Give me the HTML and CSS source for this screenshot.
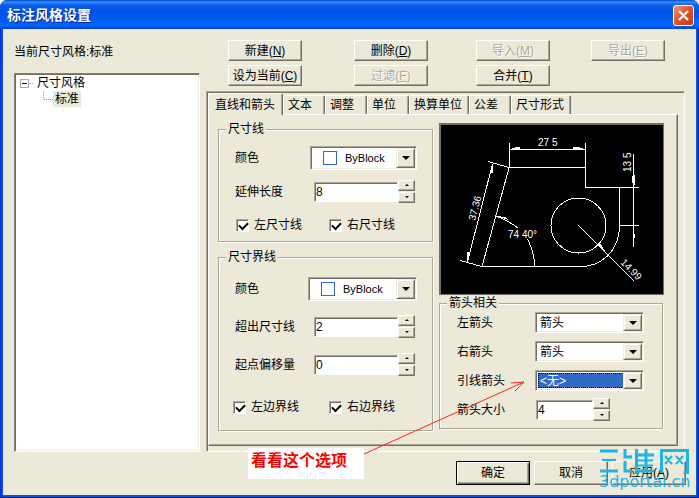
FILE: index.html
```html
<!DOCTYPE html>
<html lang="zh-CN">
<head>
<meta charset="utf-8">
<title>标注风格设置</title>
<link rel="stylesheet" href="styles.css">
</head>
<body>
<form class="window" onsubmit="return false">
  <header class="titlebar">
    <h1>标注风格设置</h1>
    <button type="button" class="close" aria-label="关闭"><svg width="11" height="11" viewBox="0 0 11 11"><path d="M1 1l9 9M10 1l-9 9" stroke="#fff" stroke-width="2.2"/></svg></button>
  </header>
  <div class="client">
    <div class="side">
      <p class="current">当前尺寸风格:标准</p>
      <div class="tree">
        <div class="node"><svg width="16" height="16" viewBox="0 0 16 16"><rect x="1.500" y="4.500" width="8" height="8" fill="#fff" stroke="#aca899"/><path d="M3 8.500h5" stroke="#000"/><path d="M11 8.500h4" stroke="#999" stroke-dasharray="1 1"/></svg><span>尺寸风格</span></div>
        <div class="node child"><svg width="13" height="16" viewBox="0 0 13 16"><path d="M3.500 0v8.500M4 8.500h9" fill="none" stroke="#999" stroke-dasharray="1 1"/></svg><span class="picked">标准</span></div>
      </div>
    </div>
    <div class="main">
      <div class="commands">
        <button type="button">新建(<u>N</u>)</button>
        <button type="button">删除(<u>D</u>)</button>
        <button type="button" disabled>导入(<u>M</u>)</button>
        <button type="button" disabled>导出(<u>E</u>)</button>
        <button type="button">设为当前(<u>C</u>)</button>
        <button type="button" disabled>过滤(<u>F</u>)</button>
        <button type="button">合并(<u>T</u>)</button>
      </div>
      <div class="frame">
        <nav class="tabs" role="tablist">
          <button type="button" role="tab" aria-selected="true" class="tab active">直线和箭头</button>
          <button type="button" role="tab" class="tab">文本</button>
          <button type="button" role="tab" class="tab">调整</button>
          <button type="button" role="tab" class="tab">单位</button>
          <button type="button" role="tab" class="tab wide">换算单位</button>
          <button type="button" role="tab" class="tab">公差</button>
          <button type="button" role="tab" class="tab wide">尺寸形式</button>
        </nav>
        <div class="page">
          <div class="column lines">
            <fieldset class="group dimension">
              <legend>尺寸线</legend>
              <div class="row"><label for="c1">颜色</label><span class="combo color"><select id="c1"><option>ByBlock</option></select></span></div>
              <div class="row"><label for="s1">延伸长度</label><span class="spin"><input id="s1" value="8"><button type="button" class="up" aria-label="增加"></button><button type="button" class="down" aria-label="减少"></button></span></div>
              <div class="checks"><label><input type="checkbox" checked>左尺寸线</label><label><input type="checkbox" checked>右尺寸线</label></div>
            </fieldset>
            <fieldset class="group extension">
              <legend>尺寸界线</legend>
              <div class="row"><label for="c2">颜色</label><span class="combo color"><select id="c2"><option>ByBlock</option></select></span></div>
              <div class="row"><label for="s2">超出尺寸线</label><span class="spin"><input id="s2" value="2"><button type="button" class="up" aria-label="增加"></button><button type="button" class="down" aria-label="减少"></button></span></div>
              <div class="row"><label for="s3">起点偏移量</label><span class="spin"><input id="s3" value="0"><button type="button" class="up" aria-label="增加"></button><button type="button" class="down" aria-label="减少"></button></span></div>
              <div class="checks"><label><input type="checkbox" checked>左边界线</label><label><input type="checkbox" checked>右边界线</label></div>
            </fieldset>
          </div>
          <div class="column arrows">
            <div class="preview">
              <svg viewBox="441 125 222 169" fill="none" stroke="#fff" shape-rendering="crispEdges">
                <path d="M509.500 143v25M585.500 143v44M510 149.500h75M510 167.500h75M585 187.500h54M619.500 188v38q0 18-12 30q-12 11-28 10.500H482L509 168M488 161.500l21 6M460.500 260.500l21 6M620 225.500h19M633.500 154v93M492.500 164L467.500 262M534.500 266q0-14-7-27M496 216q13 5 22 12M578.500 225.500L634 281"/>
                <circle cx="578.500" cy="225.500" r="27.500"/>
                <g fill="#fff" stroke="none"><path d="M511 149l5-2h4v3zM584 149l-5-2h-6v3zM633 187l-1-9 1-3h2v9zM633 226l2 10-1 4-1-4zM493 164l-3 8 1 1h2zM467 262l0-10 3 1zM496 216l10 1 2 3zM605 251l-7-5 2-3z"/></g>
                <g class="drawing-text">
                  <text x="538" y="146">27 5</text>
                  <text x="508" y="238">74 40°</text>
                  <text transform="translate(475 221) rotate(-75)">37.36</text>
                  <text transform="translate(631 172) rotate(-90)">13 5</text>
                  <text transform="translate(620 263) rotate(45)">14.99</text>
                </g>
              </svg>
            </div>
            <fieldset class="group arrow">
              <legend>箭头相关</legend>
              <div class="row"><label for="a1">左箭头</label><span class="combo"><select id="a1"><option>箭头</option></select></span></div>
              <div class="row"><label for="a2">右箭头</label><span class="combo"><select id="a2"><option>箭头</option></select></span></div>
              <div class="row"><label for="a3">引线箭头</label><span class="combo selected"><select id="a3"><option>&lt;无&gt;</option></select></span></div>
              <div class="row"><label for="s4">箭头大小</label><span class="spin small"><input id="s4" value="4"><button type="button" class="up" aria-label="增加"></button><button type="button" class="down" aria-label="减少"></button></span></div>
            </fieldset>
          </div>
        </div>
      </div>
    </div>
    <footer class="actions">
      <button type="button" class="default">确定</button>
      <button type="button">取消</button>
      <button type="button">应用(<u>A</u>)</button>
    </footer>
  </div>
  <p class="note">看看这个选项</p>
  <svg class="pointer" width="160" height="74" viewBox="0 0 160 74" fill="none" stroke="#f22"><path d="M0 73L160 1M147 2L160 1L151 10"/></svg>
  <div class="watermark">
    <svg width="92" height="27" viewBox="0 0 92 27" fill="none" stroke="#1eb4e4" stroke-width="3" role="img" aria-label="三维网"><path d="M1 4h18M1 24h18M26 2v8h7M26 14v10h7M37.500 2v23M47 2v23M37 8h18M37 24h18M62.500 26V3.500h26V26h-4"/><path d="M3 13h14M38 13.500h16M38 18.500h16M66 9l7 8M73 9l-7 8M77 9l7 8M84 9l-7 8" stroke-width="2"/></svg>
    <span>3dportal.cn</span>
  </div>
</form>
</body>
</html>
```
FILE: styles.css
```css
* { box-sizing: border-box; }
body { margin: 0; background: #fff; }
body, button, input, select { font: 12px/16px "Liberation Sans", "Noto Sans CJK SC", sans-serif; color: #000; }
h1, p { margin: 0; }
button, input, select { border-radius: 0; padding: 0; margin: 0; outline: 0; }
svg { display: block; }

.window { position: relative; display: flex; flex-direction: column; min-height: 100vh; padding: 0 3px 4px; border-radius: 7px 7px 0 0; background: linear-gradient(90deg, #0019cf 0, #0855dd 2px, #0855dd calc(100% - 2px), #00138c 100%); overflow: hidden; box-shadow: inset 0 -2px #00138c; }
.titlebar { display: flex; align-items: center; justify-content: space-between; height: 29px; margin: 0 -3px; padding: 1px 5px 0 7px; background: linear-gradient(#0048c8 0, #3b8dff 2px, #0a5fe8 5px, #0054e3 12px, #005af0 18px, #0066ff 24px, #0060f8 26px, #003dd7 29px); }
h1 { font-size: 14px; line-height: 20px; font-weight: 700; color: #fff; text-shadow: 1px 1px #0a1f8c; }
.close { display: grid; place-items: center; width: 21px; height: 21px; border: 1px solid #fff; border-radius: 3px; background: linear-gradient(135deg, #ef9478, #e0502c 50%, #c23a10); }

.client { flex: 1; display: grid; grid-template-columns: 186px 1fr; grid-template-rows: auto 1fr; column-gap: 6px; padding: 11px 10px 10px 11px; background: #ece9d8; }
.side { display: flex; flex-direction: column; }
.current { padding: 4px 0; height: 33px; }
.tree { flex: 1; padding: 1px 4px; background: #fff; border: 1px solid; border-color: #808075 #fff #fff #808075; box-shadow: inset 1px 1px #716f64, inset -1px -1px #f1efe2; }
.node { display: flex; align-items: center; height: 16px; }
.node span { padding: 0 2px; }
.child { padding-left: 21px; }
.picked { background: #ece9d8; }

.commands { display: grid; grid-template-columns: 126px 122px 115px 74px; gap: 4px 0; padding: 0 0 5px 22px; }
.commands button, .actions button { width: 74px; height: 21px; background: #ece9d8; border: 1px solid; border-color: #fff #716f64 #716f64 #fff; box-shadow: inset -1px -1px #aca899; }
.commands button:disabled { color: #aca899; text-shadow: 1px 1px #fff; }

.frame { margin-right: 1px; padding: 1px 6px 5px 1px; border: 1px solid; border-color: #aca899 #fff #fff #aca899; box-shadow: inset 1px 1px #716f64, inset -1px -1px #f1efe2; }
.tabs { display: flex; align-items: flex-end; height: 21px; }
.tab { height: 19px; padding: 0 6px 0 4px; min-width: 42px; text-align: left; background: #ece9d8; border: solid; border-width: 1px 1px 0; border-color: #fff #716f64 #fff #fff; border-radius: 2px 2px 0 0; box-shadow: inset -1px 0 #aca899; }
.tab.active { position: relative; height: 22px; width: 75px; margin-bottom: -1px; padding: 0 6px; }
.tab.wide { width: 60px; }
.page { display: grid; grid-template-columns: 215px 1fr; column-gap: 6px; padding: 8px 13px 14px 9px; border: 1px solid; border-color: #fff #716f64 #716f64 #fff; box-shadow: inset -1px -1px #aca899; }
.group { position: relative; min-width: 0; margin: 0; padding: 0; border: 1px solid #aca899; box-shadow: 1px 1px #fff, inset 1px 1px #fff; }
legend { position: absolute; top: -9px; left: 7px; padding: 0 2px; background: #ece9d8; }
.column { display: flex; flex-direction: column; }
.lines { padding-top: 6px; gap: 15px; }
.arrows { gap: 8px; }
.row { display: flex; align-items: center; justify-content: space-between; }
.row > label { white-space: nowrap; }
.dimension, .extension { height: 113px; padding: 16px 15px 0 16px; }
.extension { height: 174px; padding-top: 19px; }
.dimension .row { height: 24px; margin-bottom: 10px; }
.extension .row { height: 24px; margin-bottom: 14px; }
.combo { position: relative; display: block; width: 109px; height: 21px; background: #fff; border: 1px solid; border-color: #aca899 #fff #fff #aca899; box-shadow: inset 1px 1px #716f64, inset -1px -1px #f1efe2; padding: 2px; }
.combo select { display: block; width: 100%; height: 100%; padding: 0 20px 0 2px; appearance: none; border: 0; background: transparent; }
.combo::before { content: ""; position: absolute; z-index: 1; top: 1px; right: 1px; bottom: 1px; width: 17px; background: #ece9d8; border: 1px solid; border-color: #f1efe2 #716f64 #716f64 #f1efe2; box-shadow: inset 1px 1px #fff, inset -1px -1px #aca899; pointer-events: none; }
.combo::after { content: ""; position: absolute; z-index: 2; right: 6px; top: 8px; border: solid transparent; border-width: 4px 4px 0; border-top-color: #000; pointer-events: none; }
.combo.color { width: 107px; height: 24px; }
.combo.color::after { top: 9px; }
.extension .combo.color { width: 109px; }
.combo.color select { padding-left: 32px; font-size: 11px; background: linear-gradient(#fff, #fff) 11px 3px / 12px 12px no-repeat, linear-gradient(#316ac5, #316ac5) 10px 2px / 14px 14px no-repeat; }
.combo.selected select { width: calc(100% - 17px); background: #316ac5; color: #fff; outline: 1px dotted #000; outline-offset: -1px; }
.spin { display: grid; grid-template-columns: 84px 17px; grid-template-rows: 12px 12px; margin-right: 2px; }
.spin.small { grid-template-columns: 57px 17px; }
.spin input { grid-row: 1 / 3; align-self: center; width: 100%; height: 20px; padding: 0 1px; background: #fff; border: 1px solid; border-color: #aca899 #fff #fff #aca899; box-shadow: inset 1px 1px #716f64; }
.spin button { position: relative; height: 11px; background: #ece9d8; border: 1px solid; border-color: #fff #716f64 #716f64 #fff; box-shadow: inset -1px -1px #aca899; }
.spin button::after { content: ""; position: absolute; left: 6px; top: 3px; border: solid transparent; border-width: 0 2px 2px; border-bottom-color: #000; }
.spin .down::after { border-width: 2px 2px 0; border-top-color: #000; }
.checks { display: grid; grid-template-columns: 93px 1fr; padding: 3px 0 0 1px; }
.checks label { display: flex; align-items: center; gap: 5px; }
.extension .checks { grid-template-columns: 96px 1fr; margin-left: -2px; padding: 8px 0 0; }
.checks input { appearance: none; width: 13px; height: 13px; background: #fff; border: 1px solid; border-color: #aca899 #fff #fff #aca899; box-shadow: inset 1px 1px #716f64; }
.checks input:checked::after { content: ""; display: block; width: 7px; height: 4px; margin: 2px; border: solid #000; border-width: 0 0 2px 2px; transform: rotate(-45deg); }
.preview { border: 2px solid #716f64; border-width: 2px 1px 1px 2px; background: #000; }
.preview svg { width: 100%; height: auto; }
.drawing-text { font: 10px "Liberation Sans Narrow", "Liberation Sans", sans-serif; fill: #fff; stroke: none; }
.arrow { flex: 1; margin: 0 1px 2px 0; padding: 8px 18px 0 17px; }
.arrow .row { height: 21px; margin-bottom: 8px; }
.arrow .spin.small { margin-right: 34px; }

.actions { grid-column: 1 / 3; display: flex; justify-content: flex-end; gap: 4px; padding-top: 9px; }
.actions button { height: 24px; }
.actions .default { outline: 1px solid #000; outline-offset: -1px; border-color: #000; box-shadow: inset 1px 1px #fff, inset -1px -1px #716f64, inset -2px -2px #aca899; }

.note { position: absolute; left: 248px; top: 448px; width: 116px; height: 31px; padding: 3px; background: #fff; color: #f00; font: 700 16px/20px "Liberation Serif", "Noto Sans CJK SC", serif; }
.pointer { position: absolute; left: 364px; top: 381px; }
.watermark { position: absolute; right: 8px; bottom: 9px; color: #1eb4e4; }
.watermark span { display: block; font: 16px/16px "DejaVu Sans", sans-serif; }
```
